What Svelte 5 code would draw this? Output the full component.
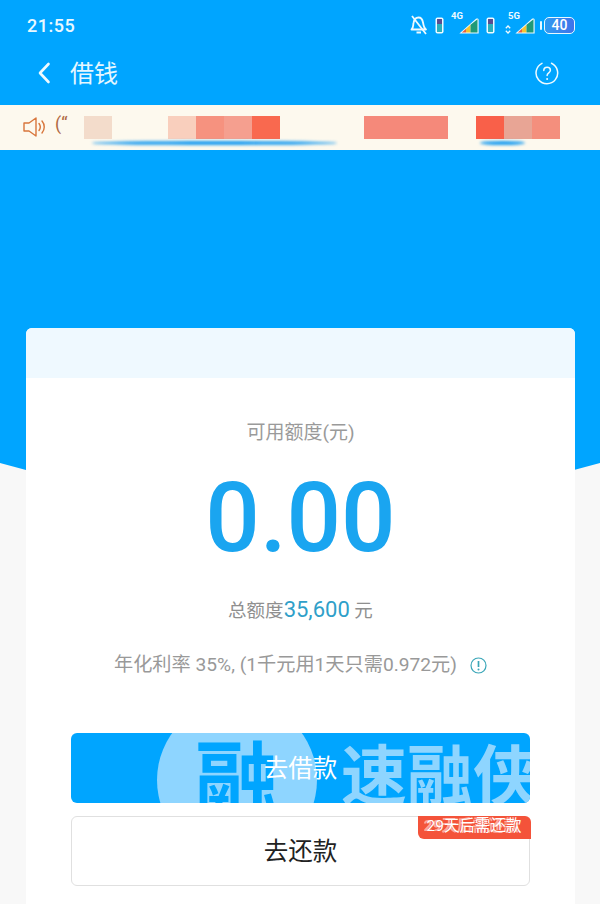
<script>
  const patches = [
    { gap: 84, w: 28, c: '#f3dccb' },
    { gap: 56, w: 28, c: '#f9cfbd' },
    { gap: 0, w: 28, c: '#f6927f' },
    { gap: 0, w: 28, c: '#f59f8f' },
    { gap: 0, w: 28, c: '#f9694f' },
    { gap: 84, w: 84, c: '#f5897a' },
    { gap: 28, w: 28, c: '#f96049' },
    { gap: 0, w: 28, c: '#e8a595' },
    { gap: 0, w: 28, c: '#f48f7d' }
  ];
</script>

<div class="page">
  <div class="hero">
    <div class="status">
      <span class="time">21:55</span>
      <div class="status-icons">
        <svg width="18" height="20" viewBox="0 0 18 20" fill="none" stroke="#eefaff" stroke-width="1.800">
          <path d="M1.500 14.500c2-1.500 1.500-4 2-6.500.5-3 2.500-5.500 5-5.500s4 2 4.500 5c.5 3 1 5.500 3 7z" stroke-linejoin="round"/>
          <path d="M6.500 17.500h4.500M2 1l14 18"/>
        </svg>
        <svg class="sim" width="9" height="17" viewBox="0 0 9 17">
          <rect x="0.500" y="0.500" width="8" height="16" rx="2" fill="#eefaff"/>
          <rect x="2" y="2" width="5" height="13" rx="0.500" fill="#2ab0bb"/>
          <rect x="2" y="2" width="5" height="5" rx="0.500" fill="#5a4b90"/>
        </svg>
        <div class="net">
          <span class="net-label">4G</span>
          <svg width="20" height="16" viewBox="0 0 20 16">
            <path d="M.400 15.600 17 .8c1-.8 2.600-.4 2.600 1v13.800z" fill="#eefaff"/>
            <path d="M2.800 14.500 7 10.800v3.700z" fill="#e8603c"/>
            <path d="M7 14.500v-3.700l4.500-4v7.700z" fill="#f5c430"/>
            <path d="M11.500 14.500V6.800l7-5.600v13.300z" fill="#1f9a78"/>
          </svg>
        </div>
        <svg class="sim two" width="9" height="17" viewBox="0 0 9 17">
          <rect x="0.500" y="0.500" width="8" height="16" rx="2" fill="#eefaff"/>
          <rect x="2" y="2" width="5" height="13" rx="0.500" fill="#2ab0bb"/>
          <rect x="2" y="2" width="5" height="5" rx="0.500" fill="#5a4b90"/>
        </svg>
        <svg class="updown" width="6" height="9" viewBox="0 0 6 9" fill="none" stroke="#eefaff" stroke-width="1.300">
          <path d="M.800 3.200 3 1l2.200 2.200M.800 5.800 3 8l2.200-2.200"/>
        </svg>
        <div class="net tight">
          <span class="net-label">5G</span>
          <svg width="20" height="16" viewBox="0 0 20 16">
            <path d="M.400 15.600 17 .8c1-.8 2.600-.4 2.600 1v13.800z" fill="#eefaff"/>
            <path d="M2.800 14.500 7 10.800v3.700z" fill="#e8603c"/>
            <path d="M7 14.500v-3.700l4.500-4v7.700z" fill="#f5c430"/>
            <path d="M11.500 14.500V6.800l7-5.600v13.300z" fill="#1f9a78"/>
          </svg>
        </div>
        <div class="battery"><span>40</span></div>
      </div>
    </div>

    <div class="nav">
      <svg class="back" width="14" height="22" viewBox="0 0 14 22" fill="none" stroke="#eefaff" stroke-width="2.600" stroke-linecap="round" stroke-linejoin="round">
        <path d="M11.500 2 3 11l8.500 9"/>
      </svg>
      <span class="title">借钱</span>
      <svg class="help" width="24" height="24" viewBox="0 0 24 24" fill="none" stroke="#eefaff" stroke-width="1.500">
        <path d="M16.500 2.200A10.800 10.800 0 1 1 7 2.300" stroke-linecap="round"/>
        <path d="M8.800 9.500c0-2 1.400-3.300 3.300-3.300s3.300 1.200 3.300 3c0 2.600-3.300 2.600-3.300 5.300" stroke-linecap="round"/>
        <circle cx="12.100" cy="18" r="1" fill="#eefaff" stroke="none"/>
      </svg>
    </div>

    <div class="notice">
      <svg class="speaker" width="26" height="22" viewBox="0 0 26 22" fill="none" stroke="#d8763c" stroke-width="1.400">
        <path d="M1 7h5l7-5v18l-7-5H1z" stroke-linejoin="round"/>
        <path d="M16 7.500c1.500 2 1.500 5 0 7M19 5c3 3.500 3 8.500 0 12" stroke-linecap="round"/>
      </svg>
      <span class="quote">(“</span>
      <div class="mosaic">
        {#each patches as p}
          <span class="patch" style="margin-left: {p.gap}px; width: {p.w}px; background: {p.c}"></span>
        {/each}
      </div>
      <span class="smear one"></span>
      <span class="smear two"></span>
    </div>
  </div>

  <div class="card">
    <div class="card-band"></div>
    <div class="card-body">
      <div class="label">可用额度(元)</div>
      <div class="amount">0.00</div>
      <div class="total">总额度<span class="total-num">35,600</span> 元</div>
      <div class="rate">
        年化利率 35%, (1千元用1天只需0.972元)
        <svg width="17" height="17" viewBox="0 0 17 17" fill="none" stroke="#3aa6b8" stroke-width="1.200">
          <circle cx="8.500" cy="8.500" r="7.500"/>
          <path d="M8.500 4v6" stroke-width="1.700"/>
          <circle cx="8.500" cy="12.500" r="1" fill="#3aa6b8" stroke="none"/>
        </svg>
      </div>

      <div class="actions">
        <button class="btn primary">
          <div class="mark" aria-hidden="true">
            <div class="mark-circle"><span>融</span></div>
            <span class="mark-text">速融侠</span>
          </div>
          <span class="btn-label">去借款</span>
        </button>
        <button class="btn secondary">
          <span class="btn-label">去还款</span>
          <span class="tag"><span class="tag-ghost">29天后需还款</span>29天后需还款</span>
        </button>
      </div>
    </div>
  </div>
</div>

<style>
  :global(body) {
    margin: 0;
    background: #f8f8f8;
  }

  .page {
    position: relative;
    width: 600px;
    height: 904px;
    overflow: hidden;
    font-family: "Roboto", "Noto Sans CJK SC", sans-serif;
  }

  .hero {
    height: 470px;
    background: #00a5ff;
    clip-path: polygon(0 0, 100% 0, 100% 463px, 574px 470px, 26px 470px, 0 463px);
  }

  .status {
    display: flex;
    align-items: center;
    justify-content: space-between;
    height: 50px;
    padding: 0 25px 0 27px;
    color: #e8f8ff;
  }
  .time {
    font-size: 18px;
    font-weight: 500;
    letter-spacing: 0.5px;
  }
  .status-icons {
    display: flex;
    align-items: center;
    height: 24px;
  }
  .sim {
    margin-left: 7px;
  }
  .net {
    position: relative;
    display: flex;
    align-items: flex-end;
    height: 18px;
    margin-left: 15px;
  }
  .sim.two {
    margin-left: 7px;
  }
  .net.tight {
    margin-left: 4px;
  }
  .updown {
    margin-left: 10px;
    margin-top: 8px;
  }
  .net-label {
    position: absolute;
    left: -8px;
    top: -6px;
    font-size: 9.500px;
    font-weight: 700;
    color: #eefaff;
  }
  .net.tight .net-label {
    left: -7px;
  }
  .battery {
    position: relative;
    width: 29px;
    height: 15px;
    margin-left: 9px;
    border: 1.500px solid #e8f8ff;
    border-radius: 5px;
    background: linear-gradient(90deg, #2f9bf0, #3f72ea);
    display: flex;
    align-items: center;
    justify-content: center;
    font-size: 14px;
    font-weight: 500;
    color: #fff;
    line-height: 1;
  }
  .battery::before {
    content: "";
    position: absolute;
    left: -5px;
    top: 3px;
    width: 2px;
    height: 9px;
    background: #e8f8ff;
    border-radius: 1px;
  }

  .nav {
    display: flex;
    align-items: center;
    height: 55px;
    padding: 0 41px 10px 37px;
    box-sizing: border-box;
  }
  .title {
    margin: -3px 0 0 19px;
    font-size: 24px;
    color: #e6f7ff;
  }
  .help {
    margin-left: auto;
  }

  .notice {
    position: relative;
    display: flex;
    align-items: center;
    height: 45px;
    background: #fdf9ee;
  }
  .speaker {
    position: absolute;
    left: 23px;
    top: 11px;
  }
  .quote {
    position: absolute;
    left: 55px;
    top: 8px;
    font-size: 18px;
    color: #b06a45;
  }
  .mosaic {
    display: flex;
    height: 23px;
    margin-top: -1px;
    filter: blur(0.4px);
  }
  .patch {
    display: block;
    flex: none;
  }
  .smear {
    position: absolute;
    top: 36px;
    height: 4px;
    background: #1a9cf0;
    filter: blur(1.500px);
    border-radius: 50%;
  }
  .smear.one {
    left: 92px;
    width: 245px;
  }
  .smear.two {
    left: 480px;
    width: 45px;
  }

  .card {
    position: absolute;
    left: 26px;
    top: 328px;
    width: 549px;
    height: 576px;
    background: #fff;
    border-radius: 6px 6px 0 0;
    overflow: hidden;
  }
  .card-band {
    height: 50px;
    background: #eff9ff;
  }
  .card-body {
    display: flex;
    flex-direction: column;
    align-items: center;
    padding: 42px 45px 0;
  }
  .label {
    font-size: 19px;
    line-height: 26px;
    color: #9a9a9a;
  }
  .amount {
    margin-top: 16px;
    font-size: 96px;
    font-weight: 500;
    line-height: 112px;
    color: #1aa5f0;
  }
  .total {
    margin-top: 22px;
    font-size: 18.500px;
    line-height: 28px;
    color: #8f8f8f;
  }
  .total-num {
    font-size: 22px;
    color: #2f9fc9;
  }
  .rate {
    display: flex;
    align-items: center;
    gap: 13px;
    margin-top: 27px;
    font-size: 19.200px;
    line-height: 26px;
    color: #999;
    white-space: nowrap;
  }

  .actions {
    align-self: stretch;
    display: flex;
    flex-direction: column;
    gap: 13px;
    margin-top: 55px;
  }
  .btn {
    position: relative;
    height: 70px;
    padding: 0 0 4px;
    border-radius: 6px;
    font-family: inherit;
    font-size: 24px;
    box-sizing: border-box;
  }
  .primary {
    border: 0;
    background: #00a5ff;
    color: #fff;
  }
  .secondary {
    border: 1.500px solid #e0e0e0;
    background: #fff;
    color: #222;
  }
  .tag {
    position: absolute;
    right: -1.500px;
    top: -1.500px;
    width: 113px;
    height: 23px;
    display: flex;
    align-items: center;
    justify-content: center;
    background: #f4533a;
    border-radius: 0 6px 0 6px;
    color: #fff;
    font-size: 15.500px;
    line-height: 1;
    white-space: nowrap;
    overflow: hidden;
  }
  .tag-ghost {
    position: absolute;
    left: 6px;
    top: 3px;
    font-weight: 700;
    opacity: 0.5;
  }

  .mark {
    position: absolute;
    inset: 0;
    overflow: hidden;
    border-radius: 6px;
    text-align: left;
  }
  .mark-circle {
    position: absolute;
    left: 86px;
    top: -33px;
    width: 160px;
    height: 160px;
    border-radius: 50%;
    background: #8ed5ff;
    text-align: center;
    font-family: "Noto Sans CJK SC", sans-serif;
    font-size: 84px;
    font-weight: 700;
    line-height: 150px;
    color: #00a5ff;
  }
  .mark-text {
    position: absolute;
    left: 270px;
    top: 0;
    font-family: "Noto Sans CJK SC", sans-serif;
    font-size: 66px;
    font-weight: 700;
    line-height: 76px;
    color: #8ed5ff;
    white-space: nowrap;
  }
  .btn-label {
    position: relative;
    font-size: 24.500px;
  }
</style>
